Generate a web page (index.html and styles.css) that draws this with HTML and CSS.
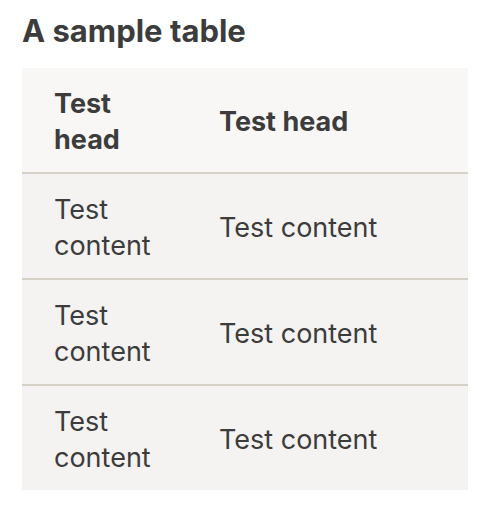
FILE: index.html
```html
<!DOCTYPE html>
<html>
<head>
<meta charset="utf-8">
<link rel="stylesheet" href="styles.css">
</head>
<body>
<h2 class="title">A sample table</h2>
<table class="sample">
  <thead>
    <tr><th class="c1">Test head</th><th>Test head</th></tr>
  </thead>
  <tbody>
    <tr><td class="c1">Test content</td><td>Test content</td></tr>
    <tr><td class="c1">Test content</td><td>Test content</td></tr>
    <tr><td class="c1">Test content</td><td>Test content</td></tr>
  </tbody>
</table>
</body>
</html>
```
FILE: styles.css
```css
html, body { margin: 0; background: #ffffff; }
body {
  padding: 12px 20px 0 22px;
  font-family: Inter, "Liberation Sans", sans-serif;
  color: #3c3c3c;
}
.title {
  margin: 0 0 18px 0;
  font-size: 31px;
  line-height: 38px;
  font-weight: 700;
}
.sample {
  width: 446px;
  border-collapse: collapse;
  background: #f4f3f1;
}
.sample th, .sample td {
  text-align: left;
  vertical-align: middle;
  padding: 18px 32px 14px 32px;
  font-size: 27px;
  line-height: 36px;
}
.sample th { font-weight: 700; }
.sample thead tr { background: #f8f7f5; }
.sample thead tr, .sample tbody tr:not(:last-child) { border-bottom: 2px solid #d5d1c6; }
.sample .c1 { width: 101px; }
```
